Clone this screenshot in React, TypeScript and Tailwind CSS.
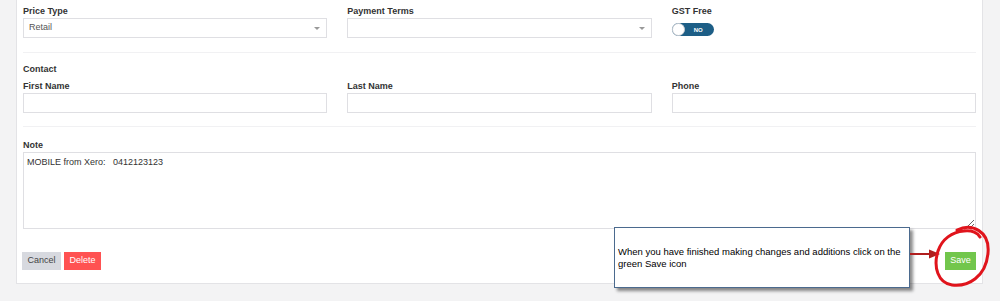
import React from "react";

const Label = ({ children, className = "" }: { children: React.ReactNode; className?: string }) => (
  <div className={`text-[9px] font-bold leading-[13px] text-[#333] ${className}`}>{children}</div>
);

const SelectBox = ({ value }: { value?: string }) => (
  <div className="h-[20px] border border-[#dfdfe3] bg-white flex items-center justify-between pl-[5px] pr-[6px]">
    <span className="text-[9px] text-[#555]">{value}</span>
    <span className="w-0 h-0 border-l-[3px] border-r-[3px] border-t-[3px] border-l-transparent border-r-transparent border-t-[#999]" />
  </div>
);

const TextInput = () => <input className="block h-[20px] w-full border border-[#dfdfe3] bg-white outline-none" />;

export default function App() {
  return (
    <div className="relative w-[1000px] h-[301px] overflow-hidden bg-[#f3f3f4]" style={{ fontFamily: '"Liberation Sans", Arial, sans-serif' }}>
      <div className="ml-[16px] w-[967px] bg-white border border-t-0 border-[#e3e3e6] px-[6px] pt-[5px] pb-[13px]">
        {/* row 1 */}
        <div className="grid grid-cols-3 gap-x-[20px]">
          <div>
            <Label>Price Type</Label>
            <SelectBox value="Retail" />
          </div>
          <div>
            <Label>Payment Terms</Label>
            <SelectBox />
          </div>
          <div>
            <Label>GST Free</Label>
            <div className="mt-[5px] w-[42px] h-[13px] rounded-full bg-[#1d5e86] relative flex items-center">
              <span className="absolute left-0 top-0 w-[13px] h-[13px] rounded-full bg-white border border-[#c9ccd2]" />
              <span className="ml-[22px] text-[6px] font-bold text-white leading-none">NO</span>
            </div>
          </div>
        </div>
        <div className="mt-[14px] h-px bg-[#f1f1f3]" />

        {/* contact */}
        <Label className="mt-[10px]">Contact</Label>
        <div className="grid grid-cols-3 gap-x-[20px] mt-[4px]">
          <div>
            <Label>First Name</Label>
            <TextInput />
          </div>
          <div>
            <Label>Last Name</Label>
            <TextInput />
          </div>
          <div>
            <Label>Phone</Label>
            <TextInput />
          </div>
        </div>
        <div className="mt-[13px] h-px bg-[#f1f1f3]" />

        {/* note */}
        <Label className="mt-[12px]">Note</Label>
        <textarea
          className="block w-full h-[77px] border border-[#dfdfe3] px-[3px] py-[4px] text-[9px] leading-[11px] text-[#333] outline-none"
          defaultValue={"MOBILE from Xero:   0412123123"}
        />

        <div className="mt-[23px] flex items-center">
          <button className="h-[18px] w-[39px] bg-[#d7d9df] text-[9px] text-[#444] -ml-[1px]">Cancel</button>
          <button className="h-[18px] w-[37px] ml-[3px] bg-[#ff5252] text-[9px] text-white">Delete</button>
          <button className="ml-auto h-[18px] w-[31px] bg-[#72c64c] text-[9px] text-white">Save</button>
        </div>
      </div>

      {/* callout annotation */}
      <div className="absolute left-[614px] top-[227px] w-[296px] h-[61px] bg-white border border-[#4b6a8e] shadow-[3px_3px_3px_rgba(0,0,0,0.45)] flex items-center pl-[3px]">
        <p className="text-[9.5px] leading-[12px] text-black">
          When you have finished making changes and additions click on the
          <br />
          green Save icon
        </p>
      </div>

      <svg className="absolute left-[900px] top-[215px]" width="100" height="86" viewBox="0 0 100 86">
        <line x1="10" y1="39" x2="31" y2="39" stroke="#b01e1e" strokeWidth="2" />
        <polygon points="29,34.5 40,39 29,43.5" fill="#b01e1e" />
        <path
          d="M57 15 C72 8 90 16 88 38 C86 62 68 72 52 70 C38 68 33 52 38 36 C42 24 52 17 64 16 C72 15 78 18 80 22"
          fill="none"
          stroke="#e0141c"
          strokeWidth="3"
          strokeLinecap="round"
        />
      </svg>
    </div>
  );
}
